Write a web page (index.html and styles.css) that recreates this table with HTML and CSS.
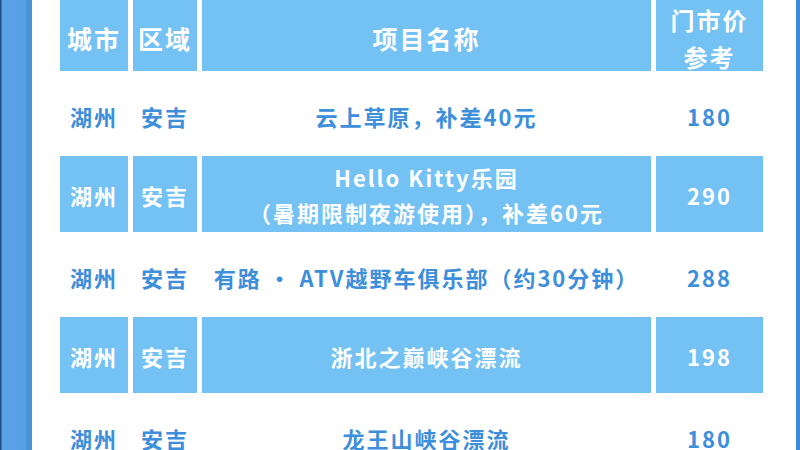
FILE: index.html
```html
<!DOCTYPE html>
<html lang="zh-CN">
<head>
<meta charset="utf-8">
<title>门市价参考</title>
<link rel="stylesheet" href="styles.css">
</head>
<body>
<div class="page">
  <div class="edge-left"></div>
  <main class="main">
    <div class="table">
      <div class="cell head">城市</div>
      <div class="cell head">区域</div>
      <div class="cell head">项目名称</div>
      <div class="cell head two">门市价<br>参考</div>

      <div class="cell">湖州</div>
      <div class="cell">安吉</div>
      <div class="cell">云上草原，补差40元</div>
      <div class="cell">180</div>

      <div class="cell blue">湖州</div>
      <div class="cell blue">安吉</div>
      <div class="cell blue two">Hello Kitty乐园<br>（暑期限制夜游使用），补差60元</div>
      <div class="cell blue">290</div>

      <div class="cell">湖州</div>
      <div class="cell">安吉</div>
      <div class="cell">有路 · ATV越野车俱乐部（约30分钟）</div>
      <div class="cell">288</div>

      <div class="cell blue">湖州</div>
      <div class="cell blue">安吉</div>
      <div class="cell blue">浙北之巅峡谷漂流</div>
      <div class="cell blue">198</div>

      <div class="cell">湖州</div>
      <div class="cell">安吉</div>
      <div class="cell">龙王山峡谷漂流</div>
      <div class="cell">180</div>
    </div>
  </main>
  <div class="edge-right"></div>
</div>
</body>
</html>
```
FILE: styles.css
```css
html, body {
  margin: 0;
  padding: 0;
  width: 800px;
  height: 450px;
  overflow: hidden;
  background: #ffffff;
}

.page {
  display: flex;
  width: 800px;
  height: 450px;
  font-family: "Noto Sans CJK SC", "Noto Sans", sans-serif;
  font-weight: 700;
}

.edge-left {
  width: 32px;
  flex: 0 0 32px;
  background: linear-gradient(to right, #1f4c80 0, #1f4c80 1px, #5aa2e6 2px, #58a0e5 25px, #4c92da 27px, #4c92da 32px);
}

.main {
  flex: 1;
  padding-left: 28px;
  background: #ffffff;
}

.edge-right {
  width: 4px;
  flex: 0 0 4px;
  background: #3e8ad8;
}

.table {
  display: grid;
  grid-template-columns: 68px 64px 449px 107px;
  grid-template-rows: 71px 77px 76px 77px 76px 77px;
  column-gap: 5px;
  row-gap: 4px;
}

.cell {
  display: flex;
  align-items: center;
  justify-content: center;
  text-align: center;
  box-sizing: border-box;
  padding-top: 5px;
  font-size: 22px;
  letter-spacing: 2px;
  color: #3d8edb;
  white-space: nowrap;
}

.head {
  background: #74c1f4;
  color: #ffffff;
  font-size: 25px;
  letter-spacing: 2px;
  padding-top: 5px;
}

.blue {
  background: #74c1f4;
  color: #ffffff;
  padding-top: 2px;
}

.two {
  line-height: 35px;
}

.head.two {
  font-size: 24px;
  line-height: 37px;
}
```
